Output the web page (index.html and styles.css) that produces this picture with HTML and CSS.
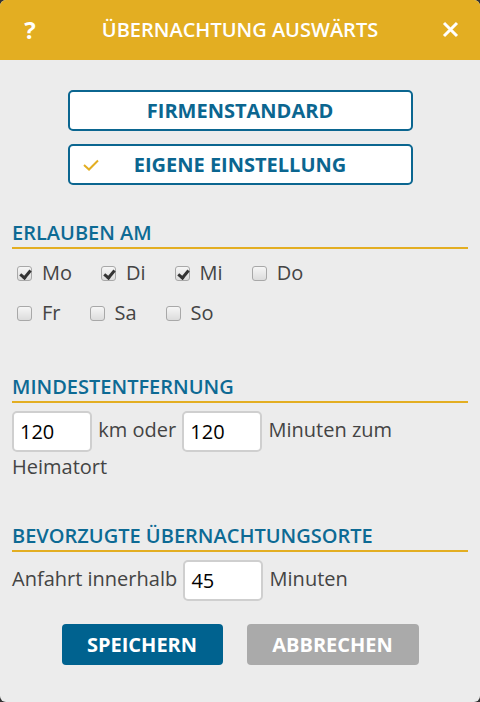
FILE: index.html
```html
<!DOCTYPE html>
<html lang="de">
<head>
    <meta charset="UTF-8">
    <meta name="viewport" content="width=device-width, initial-scale=1.0">
    <title>Übernachtung auswärts</title>
    <link rel="stylesheet" href="styles.css">
</head>
<body>
    <div class="dialog">
        <div class="dialog-header">
            <span class="header-icon">?</span>
            <h1>Übernachtung auswärts</h1>
            <svg class="header-close" width="17" height="17" viewBox="0 0 17 17">
                <path d="M2 2 L15 15 M15 2 L2 15" stroke="#fff" stroke-width="3"/>
            </svg>
        </div>

        <div class="dialog-body">
            <div class="mode-buttons">
                <button class="mode-button">Firmenstandard</button>
                <button class="mode-button selected">
                    <svg class="mode-check" width="16" height="12" viewBox="0 0 16 12">
                        <path d="M1 6 L6 10.5 L15 1.5" fill="none" stroke="#e3ae22" stroke-width="2"/>
                    </svg>
                    Eigene Einstellung
                </button>
            </div>

            <h2>Erlauben am</h2>
            <div class="days">
                <div class="day-row">
                    <label class="day"><span class="box checked"></span>Mo</label>
                    <label class="day"><span class="box checked"></span>Di</label>
                    <label class="day"><span class="box checked"></span>Mi</label>
                    <label class="day"><span class="box"></span>Do</label>
                </div>
                <div class="day-row">
                    <label class="day"><span class="box"></span>Fr</label>
                    <label class="day"><span class="box"></span>Sa</label>
                    <label class="day"><span class="box"></span>So</label>
                </div>
            </div>

            <h2 class="after-days">Mindestentfernung</h2>
            <div class="field-line">
                <input class="num first" type="text" value="120">
                <span>km oder</span>
                <input class="num" type="text" value="120">
                <span>Minuten zum</span>
                <span>Heimatort</span>
            </div>

            <h2 class="after-field">Bevorzugte Übernachtungsorte</h2>
            <div class="field-line">
                <span>Anfahrt innerhalb</span>
                <input class="num" type="text" value="45">
                <span>Minuten</span>
            </div>

            <div class="actions">
                <button class="action save">Speichern</button>
                <button class="action cancel">Abbrechen</button>
            </div>
        </div>
    </div>
</body>
</html>
```

FILE: styles.css
```css
* {
    margin: 0;
    padding: 0;
    box-sizing: border-box;
}

body {
    font-family: 'Open Sans', sans-serif;
    background: #333;
    color: #444;
    width: 480px;
    height: 702px;
    overflow: hidden;
}

.dialog {
    width: 480px;
    height: 702px;
    background: #ececec;
    border-radius: 6px;
    overflow: hidden;
}

.dialog-header {
    height: 60px;
    background: #e3ae22;
    color: #fff;
    display: flex;
    align-items: center;
    justify-content: space-between;
    padding: 0 21px 2px 22px;
}

.dialog-header h1 {
    font-size: 20px;
    font-weight: 600;
    text-transform: uppercase;
}

.header-icon {
    font-size: 24px;
    font-weight: 700;
    width: 16px;
    text-align: center;
}

.header-close {
    margin-top: 1px;
}

.dialog-body {
    padding: 30px 12px 0;
}

.mode-buttons {
    display: flex;
    flex-direction: column;
    align-items: center;
    gap: 13px;
}

.mode-button {
    position: relative;
    width: 345px;
    height: 41px;
    background: #fff;
    border: 2px solid #0b6690;
    border-radius: 5px;
    color: #0b6690;
    font-family: inherit;
    font-size: 20px;
    font-weight: 700;
    text-transform: uppercase;
}

.mode-check {
    position: absolute;
    left: 13px;
    top: 13px;
}

h2 {
    margin-top: 34px;
    padding-bottom: 1px;
    border-bottom: 2px solid #e3ae22;
    color: #0d6a94;
    font-size: 20px;
    font-weight: 600;
    line-height: 27px;
    text-transform: uppercase;
}

h2.after-days {
    margin-top: 40px;
}

h2.after-field {
    margin-top: 40px;
}

.days {
    padding: 4px 0 0 5px;
}

.day-row {
    display: flex;
    gap: 29px;
    height: 40px;
}

.day {
    display: flex;
    align-items: center;
    gap: 10px;
    font-size: 20px;
    line-height: 40px;
}

.box {
    width: 15px;
    height: 15px;
    border: 1px solid #a8a8a8;
    border-radius: 3px;
    background: linear-gradient(#f6f6f6, #dcdcdc);
    position: relative;
}

.box.checked::after {
    content: "";
    position: absolute;
    left: 4px;
    top: 1px;
    width: 4px;
    height: 8px;
    border: solid #333;
    border-width: 0 3px 3px 0;
    transform: rotate(40deg);
}

.field-line {
    margin-top: 8px;
    font-size: 20px;
    line-height: 30px;
    color: #444;
}

.num {
    width: 80px;
    height: 41px;
    margin: 0 1px;
    padding: 0 6px;
    border: 2px solid #cfcfcf;
    border-radius: 5px;
    background: #fff;
    font-family: inherit;
    font-size: 20px;
    color: #000;
    vertical-align: middle;
}

.num.first {
    margin-left: 0;
}

.actions {
    display: flex;
    justify-content: center;
    gap: 24px;
    margin-top: 23px;
}

.action {
    height: 41px;
    border: none;
    border-radius: 4px;
    color: #fff;
    font-family: inherit;
    font-size: 20px;
    font-weight: 700;
    text-transform: uppercase;
}

.action.save {
    width: 161px;
    background: #00628f;
}

.action.cancel {
    width: 172px;
    background: #aaa;
}
```
